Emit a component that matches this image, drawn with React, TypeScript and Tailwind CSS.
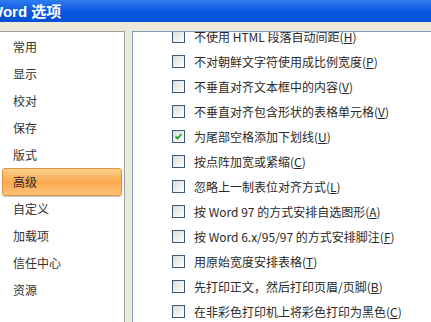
import React from "react";

const navItems = ["常用", "显示", "校对", "保存", "版式", "高级", "自定义", "加载项", "信任中心", "资源"];

type Opt = { label: string; key: string; checked?: boolean };

const options: Opt[] = [
  { label: "不使用 HTML 段落自动间距", key: "H" },
  { label: "不对朝鲜文字符使用成比例宽度", key: "P" },
  { label: "不垂直对齐文本框中的内容", key: "V" },
  { label: "不垂直对齐包含形状的表格单元格", key: "V" },
  { label: "为尾部空格添加下划线", key: "U", checked: true },
  { label: "按点阵加宽或紧缩", key: "C" },
  { label: "忽略上一制表位对齐方式", key: "L" },
  { label: "按 Word 97 的方式安排自选图形", key: "A" },
  { label: "按 Word 6.x/95/97 的方式安排脚注", key: "F" },
  { label: "用原始宽度安排表格", key: "T" },
  { label: "先打印正文，然后打印页眉/页脚", key: "B" },
  { label: "在非彩色打印机上将彩色打印为黑色", key: "C" },
];

function CheckBox({ checked }: { checked?: boolean }) {
  return (
    <span className="w-[13px] h-[13px] shrink-0 border border-[#3c5a78] bg-gradient-to-br from-[#dcdcd6] to-white flex items-center justify-center">
      {checked && (
        <svg width="9" height="9" viewBox="0 0 9 9">
          <path d="M1.5 4.5 L3.5 6.5 L7.5 2" fill="none" stroke="#21a121" strokeWidth="1.8" />
        </svg>
      )}
    </span>
  );
}

export default function App() {
  return (
    <div
      className="w-[431px] h-[322px] overflow-hidden bg-[#ece9d8] flex flex-col text-[12px] text-[#2a2a2a]"
      style={{ fontFamily: '"Noto Sans CJK SC", "Liberation Sans", sans-serif' }}
    >
      {/* title bar */}
      <div className="h-[22px] shrink-0 bg-gradient-to-b from-[#2f7cf0] via-[#0a58e0] to-[#0650d8] flex items-center overflow-hidden">
        <span
          className="-ml-[11px] text-white font-bold text-[15px] leading-none whitespace-nowrap"
          style={{ fontFamily: '"Liberation Sans", "Noto Sans CJK SC", sans-serif' }}
        >
          Word 选项
        </span>
      </div>

      <div className="flex-1 flex pt-[9px] gap-[7px] min-h-0">
        {/* left nav */}
        <div className="w-[125px] shrink-0 bg-white border-t border-r border-[#a0a0a0] pt-[1px]">
          {navItems.map((item) =>
            item === "高级" ? (
              <div
                key={item}
                className="mx-[2px] h-[28px] -my-[0.5px] flex items-center pl-[10px] rounded-[3px] border border-[#d9913f] bg-gradient-to-b from-[#fdd089] via-[#fba84e] to-[#fcc278] shadow-[0_1px_1px_rgba(0,0,0,0.2)]"
              >
                {item}
              </div>
            ) : (
              <div key={item} className="h-[27px] flex items-center pl-[13px] text-[#333]">
                {item}
              </div>
            )
          )}
        </div>

        {/* right options */}
        <div className="flex-1 bg-white border-t border-l border-[#7f9db9] overflow-hidden">
          <div className="-mt-[8px] pl-[39px]">
            {options.map((o, i) => (
              <div key={i} className="h-[25px] flex items-center gap-[9px] whitespace-nowrap">
                <CheckBox checked={o.checked} />
                <span>
                  {o.label}(<span className="underline">{o.key}</span>)
                </span>
              </div>
            ))}
          </div>
        </div>
      </div>
    </div>
  );
}
